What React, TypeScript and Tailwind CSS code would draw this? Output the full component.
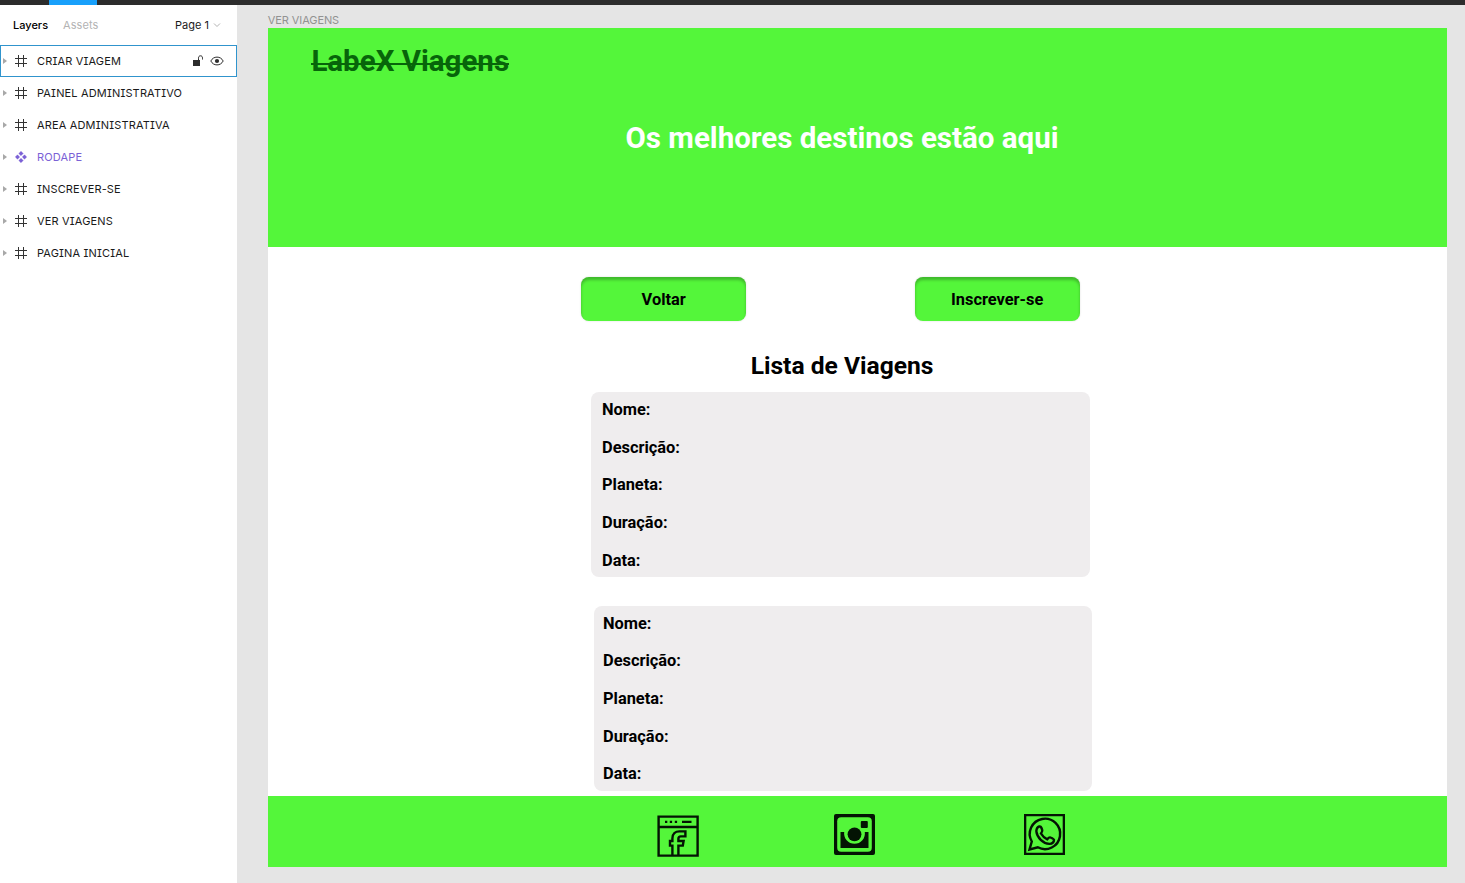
import React from "react";

const layers = [
  { name: "CRIAR VIAGEM", selected: true },
  { name: "PAINEL ADMINISTRATIVO" },
  { name: "AREA ADMINISTRATIVA" },
  { name: "RODAPE", component: true },
  { name: "INSCREVER-SE" },
  { name: "VER VIAGENS" },
  { name: "PAGINA INICIAL" },
];

const fields = ["Nome:", "Descrição:", "Planeta:", "Duração:", "Data:"];

function FrameIcon() {
  return (
    <svg className="h-3 w-3" viewBox="0 0 12 12" fill="none" stroke="#333" shapeRendering="crispEdges">
      <path d="M3.500 0v12M8.500 0v12M0 3.500h12M0 8.500h12" />
    </svg>
  );
}

function ComponentIcon() {
  return (
    <svg className="h-3 w-3" viewBox="0 0 12 12" fill="#7b61d6">
      <path d="M6 .3 8.200 2.500 6 4.700 3.800 2.500zM6 7.300l2.200 2.200L6 11.700 3.800 9.500zM2.500 3.800 4.700 6 2.500 8.200.3 6zM9.500 3.800 11.700 6 9.500 8.200 7.300 6z" stroke="#7b61d6" strokeWidth=".4" />
    </svg>
  );
}

function UnlockIcon() {
  return (
    <svg className="h-3 w-3" viewBox="0 0 12 12">
      <path d="M1 5h7v6H1z" fill="#2c2c2c" />
      <path d="M6.500 5.500V3.200C6.500 1.600 7.200 .8 8.500.8s2 .8 2 2.400V4.500" fill="none" stroke="#2c2c2c" />
    </svg>
  );
}

function EyeIcon() {
  return (
    <svg className="h-[10px] w-[14px]" viewBox="0 0 14 10">
      <path d="M.8 5C2.200 2.400 4.400 1.100 7 1.100S11.800 2.400 13.200 5C11.800 7.600 9.600 8.900 7 8.900S2.200 7.600.8 5z" fill="none" stroke="#2c2c2c" />
      <circle cx="7" cy="5" r="2.100" fill="#2c2c2c" />
    </svg>
  );
}

function FacebookIcon() {
  return (
    <svg className="h-[42px] w-[42px]" viewBox="0 0 42 42" fill="none" stroke="#041404" strokeWidth="2.400">
      <path d="M1.600 1.600h39v39h-39zM1.600 12h39" />
      <path d="M8 6.900h2.300M12.800 6.900h2.300M17.800 6.900h2.300M25 6.900h9.500" />
      <path d="M15.400 40V30.600h-2.400v-4.600h2.400v-2.600c0-4.500 3-7 7-7h6v5h-4.500c-1.600 0-2.500.8-2.500 2.300v2.300h5.200l-.8 4.600h-4.400V40" />
    </svg>
  );
}

function InstagramIcon() {
  return (
    <svg className="h-[41px] w-[41px]" viewBox="0 0 41 41">
      <rect width="41" height="41" rx="2" fill="#041404" />
      <rect x="3.200" y="3.200" width="34.600" height="34.600" rx="4" fill="#54f63a" />
      <path d="M6.500 18h3.700a10.400 10.400 0 1 0 20.600 0H34.500v16H6.500z" fill="#041404" />
      <circle cx="20.500" cy="20.300" r="6.900" fill="#041404" />
      <rect x="26.800" y="7" width="7" height="7" rx="1" fill="#041404" />
    </svg>
  );
}

function WhatsappIcon() {
  return (
    <svg className="h-[41px] w-[41px]" viewBox="0 0 41 41" fill="none" stroke="#041404" strokeWidth="2.400">
      <path d="M1.100 1.100h38.800v38.800H1.100z" />
      <path d="M5.500 35.500 7.800 27.500A15.200 15.200 0 1 1 13.800 33.300z" />
      <path d="M12.700 15.200c.6-2 1.700-3 3.300-2.700 1 .1 1.500 1.300 2.200 3.300.6 1.500-.2 2.400-1.200 3.700 1.700 3 3.400 4.500 6.300 5.800 1.200-1.500 2-2.400 3.200-1.800 1.500.6 3.400 1.500 3.500 2.300 0 2.200-1.800 4-4.600 4.100-6.400-.3-12.400-6.500-13-12.200-.1-1 .1-1.800.3-2.500z" />
    </svg>
  );
}

function ActionButton({ children }: { children: React.ReactNode }) {
  return (
    <button className="h-11 w-[165px] rounded-[8px] bg-[#54f63a] pt-[2px] text-[16.400px] font-bold text-black shadow-[inset_0_3px_3px_rgba(0,0,0,0.25),0_0_2px_rgba(0,0,0,0.15)]">
      {children}
    </button>
  );
}

function TripCard({ className }: { className: string }) {
  return (
    <article className={`h-[185px] w-[498.500px] shrink-0 rounded-[8px] bg-[#efedee] text-[16.400px] font-bold ${className}`}>
      {fields.map((field) => (
        <p className="h-[37.700px] leading-[19px]" key={field}>{field}</p>
      ))}
    </article>
  );
}

export default function App() {
  return (
    <div className="flex h-[883px] w-[1465px] flex-col overflow-hidden bg-[#e5e5e5]">
      <div className="h-[5px] shrink-0 bg-[#2c2c2c] pl-[49px]">
        <div className="h-full w-12 bg-[#18a0fb]" />
      </div>
      <div className="flex min-h-0 flex-1">
        <aside className="w-[237px] shrink-0 bg-white font-[Inter,sans-serif] text-[11px] text-[#1a1a1a]">
          <header className="flex h-10 items-center pl-[13px] pr-4">
            <span className="w-[50px] font-medium text-black">Layers</span>
            <span className="tracking-[0.100px] text-[#b3b3b3]">Assets</span>
            <span className="ml-auto">Page 1</span>
            <svg className="ml-1 h-2 w-2" viewBox="0 0 8 8" fill="none" stroke="#b3b3b3"><path d="m1 2.500 3 3 3-3" /></svg>
          </header>
          {layers.map((layer) => (
            <div
              key={layer.name}
              className={`flex h-8 items-center border ${layer.selected ? "border-[#3094cd]" : "border-transparent"} ${layer.component ? "text-[#7b61d6]" : ""}`}
            >
              <svg className="ml-px mr-[8px] h-[6px] w-[5px]" viewBox="0 0 5 6" fill="#a8a8a8"><path d="M1 0 5 3 1 6z" /></svg>
              {layer.component ? <ComponentIcon /> : <FrameIcon />}
              <span className="ml-[10px] tracking-[0.160px] [font-feature-settings:'cv08']">{layer.name}</span>
              {layer.selected && (
                <span className="ml-auto mr-3 flex items-center gap-[6px]"><UnlockIcon /><EyeIcon /></span>
              )}
            </div>
          ))}
        </aside>
        <main className="pl-[30.700px] font-[Roboto,sans-serif]">
          <p className="h-[23px] pt-[7px] font-[Inter,sans-serif] text-[11px] leading-4 tracking-[-0.080px] text-[#929292]">VER VIAGENS</p>
          <section className="flex h-[839px] w-[1179.700px] flex-col bg-white text-black">
            <header className="h-[219.400px] shrink-0 bg-[#54f63a] pt-[16px]">
              <h1 className="ml-[43.700px] h-[77px] text-[29.500px] font-bold leading-[35px] text-[#07650a]">
                <span className="relative">
                  LabeX Viagens
                  <span className="absolute inset-x-0 top-[19px] h-[1.500px] bg-[#07650a]" />
                </span>
              </h1>
              <h2 className="pr-[31px] text-center text-[29.500px] font-bold leading-[35px] text-white">Os melhores destinos estão aqui</h2>
            </header>
            <div className="ml-[313.500px] mt-[29.600px] flex gap-[168.500px]">
              <ActionButton>Voltar</ActionButton>
              <ActionButton>Inscrever-se</ActionButton>
            </div>
            <h2 className="mt-[30px] pr-[31px] text-center text-[24.600px] font-bold leading-[29px]">Lista de Viagens</h2>
            <TripCard className="ml-[323.500px] mt-[12px] pl-[10.800px] pt-[8px]" />
            <TripCard className="ml-[326px] mt-[29.400px] pl-[9.300px] pt-[7.200px]" />
            <footer className="mt-auto flex h-[71px] shrink-0 bg-[#54f63a] pl-[389.300px] pt-[18px]">
              <div className="mr-[135px] mt-[1px]"><FacebookIcon /></div>
              <div className="mr-[149px]"><InstagramIcon /></div>
              <WhatsappIcon />
            </footer>
          </section>
        </main>
      </div>
    </div>
  );
}
